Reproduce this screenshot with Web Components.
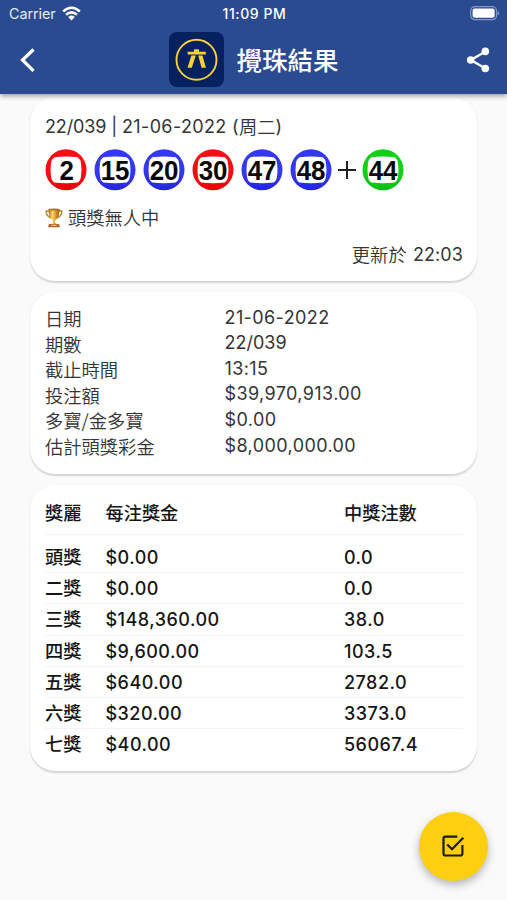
<!DOCTYPE html>
<html lang="zh-Hant"><head><meta charset="utf-8"><title>攪珠結果</title>
<style>
html,body{margin:0;height:900px;overflow:hidden;background:#fafafa}
body{font-family:Inter,"Noto Sans CJK TC",sans-serif}
</style></head><body>
<result-app></result-app>
<script>
const define=(name,html)=>customElements.define(name,class extends HTMLElement{
  connectedCallback(){
    if(this.shadowRoot)return;
    this.attachShadow({mode:'open'}).innerHTML=typeof html==='function'?html(this):html;
  }
});

define('status-bar',`<style>
:host{display:grid;grid-template-columns:1fr auto 1fr;align-items:center;height:27px;padding:0 7px 0 9px;color:#fff;font-size:14.4px;line-height:27px;box-sizing:border-box}
.l{display:flex;align-items:center;gap:6px;color:#e4e9f6;letter-spacing:-.08px}
.t{font-weight:500;font-size:14px;letter-spacing:.6px}
.r{display:flex;justify-content:flex-end}
svg{display:block}
</style>
<div class="l"><span>Carrier</span><svg width="19" height="15" viewBox="0 0 19 15" fill="none" stroke="#fff" stroke-width="2.5"><path d="M1.2 5.5Q9.5-2 17.8 5.5M4.1 8.8Q9.5 4 14.9 8.8"/><path d="M6.2 11Q9.5 8.2 12.8 11L9.5 14.4Z" fill="#fff" stroke="none"/></svg></div>
<span class="t">11:09 PM</span>
<div class="r"><svg width="30" height="15" viewBox="0 0 30 15"><rect x=".7" y=".7" width="25.8" height="13" rx="4" fill="none" stroke="#8496c8" stroke-width="1.2"/><rect x="2.6" y="2.6" width="22" height="9.2" rx="2" fill="#fff"/><path d="M27.7 4.8Q30.5 7.2 27.7 9.6Z" fill="#8496c8"/></svg></div>`);

define('app-header',`<style>
:host{display:block;height:94px;background:#2b4b91;box-shadow:0 2px 5px rgba(0,0,0,.38);position:relative;z-index:1}
.bar{display:grid;grid-template-columns:1fr auto 1fr;align-items:center;height:65px;padding:0 17px 0 18px}
.title{display:flex;align-items:center;gap:12px;color:#fff;font:500 25.5px/36px "Noto Sans CJK TC",sans-serif}
.title span{padding-bottom:2px}
.share{justify-self:end}svg{display:block}
</style><status-bar></status-bar>
<div class="bar">
<svg width="24" height="28" viewBox="0 0 24 28" fill="none" stroke="#fff" stroke-width="3.2"><path d="M15.5 3.5 4.5 14l11 10.8"/></svg>
<div class="title"><svg width="55" height="55" viewBox="0 0 55 55"><rect width="55" height="55" rx="8" fill="#05215f"/><circle cx="27.5" cy="27.7" r="20" fill="none" stroke="#f5d13c" stroke-width="1.9"/><path d="M18.6 19.8H25V17.3H30V19.8H36.8V22.6H18.6ZM22.4 23.6H26.8L22.8 35.7H18.5ZM29.2 23.6H33.4L37 35.7H32.6Z" fill="#f5d13c"/></svg><span>攪珠結果</span></div>
<svg class="share" width="24" height="26" viewBox="0 0 24 26" fill="#fff"><path d="M19.5 4.5 4.8 13l14.7 8.5" fill="none" stroke="#fff" stroke-width="2.4"/><circle cx="19.3" cy="4.4" r="3.8"/><circle cx="4.7" cy="13" r="3.8"/><circle cx="19.3" cy="21.5" r="3.8"/></svg>
</div>`);

define('result-card',`<style>
:host{display:block;box-sizing:border-box;background:#fff;border-radius:25px;box-shadow:0 1.5px 1.5px rgba(0,0,0,.15),0 0 2px rgba(0,0,0,.03);color:#343434;padding:0 14px 0 15px}
</style><slot></slot>`);

define('draw-ball',el=>{
 const c={red:['#fa0d12','#e80008'],blue:['#3438ef','#2424e0'],green:['#10d018','#06be14']}[el.getAttribute('color')];
 const n=el.getAttribute('number'),x=n.length===1?21.8:21.1;
 return `<style>:host{display:block;width:42px;height:42px}svg{display:block}</style>
 <svg width="42" height="42" viewBox="0 0 42 42"><defs><linearGradient id="g" x2="0" y2="1"><stop offset=".6" stop-color="${c[0]}"/><stop offset="1" stop-color="${c[1]}"/></linearGradient></defs>
 <circle cx="21" cy="20.8" r="20.5" fill="url(#g)"/><path d="M9.3 8.2Q21 6.6 32.7 8.2Q35.4 10 36 14Q37 20.7 36 27.4Q35.4 31.8 32.7 33.4Q21 35 9.3 33.4Q6.6 31.8 6 27.4Q5 20.7 6 14Q6.6 10 9.3 8.2Z" fill="#fff"/>
 <text x="${x}" y="30.5" text-anchor="middle" font-family="Liberation Sans,sans-serif" font-weight="700" font-size="27.5" textLength="${n.length*14.4}" lengthAdjust="spacingAndGlyphs" fill="#080808">${n}</text></svg>`});

define('draw-summary',`<style>
:host{display:block;height:184px;padding-top:18px;box-sizing:border-box;font-size:18px}
.head{display:flex;align-items:center;height:24px;white-space:pre;line-height:24px}
.cjk{font-family:"Noto Sans CJK TC",sans-serif;font-weight:350;font-size:18.3px;position:relative;top:-1px}
.a{letter-spacing:-.13px}.b{letter-spacing:.35px}
.balls{display:flex;gap:7px;margin-top:10px;height:42px;align-items:center}
.plus{width:18px;margin:0 -1px;display:block}
.note{display:flex;gap:5px;margin-top:14px;height:26px;line-height:26px;align-items:center}
.time{display:flex;justify-content:flex-end;gap:6px;margin-top:11px;height:26px;line-height:26px;letter-spacing:.1px}
</style>
<div class="head"><span class="a">22/039 | </span><span class="b">21-06-2022 (</span><span class="cjk">周二</span><span>)</span></div>
<div class="balls"><draw-ball number="2" color="red"></draw-ball><draw-ball number="15" color="blue"></draw-ball><draw-ball number="20" color="blue"></draw-ball><draw-ball number="30" color="red"></draw-ball><draw-ball number="47" color="blue"></draw-ball><draw-ball number="48" color="blue"></draw-ball><svg class="plus" width="18" height="18" viewBox="0 0 18 18"><path d="M9 0v18M0 9h18" stroke="#222" stroke-width="2"/></svg><draw-ball number="44" color="green"></draw-ball></div>
<div class="note"><svg width="18" height="20" viewBox="0 0 18 20"><defs><linearGradient id="gold"><stop stop-color="#a66516"/><stop offset=".35" stop-color="#fad86b"/><stop offset=".6" stop-color="#e5a52c"/><stop offset="1" stop-color="#9a5710"/></linearGradient></defs><path d="M4 3H1.2C1 7 3.2 9 6.5 10M14 3h2.8C17 7 14.8 9 11.5 10" fill="none" stroke="#b9862b" stroke-width="1.4"/><path d="M3.5 1.2h11C14.4 7 13 11 10 12.2v2.6l2.2 1.4H5.8L8 14.8v-2.6C5 11 3.6 7 3.5 1.2Z" fill="url(#gold)"/><ellipse cx="9" cy="1.5" rx="5.5" ry="1" fill="#a9741c"/><path d="M4 16h10l1 3.2H3Z" fill="#b5602d"/><path d="M6.5 16.7h5V18h-5Z" fill="#efbd72"/></svg><span class="cjk">頭獎無人中</span></div>
<div class="time"><span class="cjk">更新於</span><span>22:03</span></div>`);

define('info-row',`<style>
:host{display:grid;grid-template-columns:179.5px 1fr;height:25.65px;line-height:25.65px;font-size:18px}
.k{font:350 18.3px/25.65px "Noto Sans CJK TC",sans-serif;padding-top:1.4px}
.v{letter-spacing:.4px}
:host([tight]) .v{letter-spacing:0}
</style><span class="k"><slot name="label"></slot></span><span class="v"><slot></slot></span>`);

define('prize-row',`<style>
:host{display:grid;grid-template-columns:60.5px 238.5px 1fr;box-sizing:border-box;height:31.2px;line-height:31px;font-size:18px;font-weight:500;letter-spacing:.48px;color:#151515;border-bottom:1.5px solid #f4f4f4}
:host([head]){height:50.5px;line-height:54px;font-family:"Noto Sans CJK TC",sans-serif;font-size:18.2px;letter-spacing:0;margin-bottom:7px}
:host(:last-of-type){border-bottom:0}
.k{font-family:"Noto Sans CJK TC",sans-serif;font-size:18.2px;letter-spacing:0;position:relative;top:-1px}
:host([head]) .k{top:0}
</style><span class="k"><slot name="tier"></slot></span><span><slot name="prize"></slot></span><span><slot></slot></span>`);

define('verify-button',`<style>:host{display:grid;place-items:center;position:absolute;left:418.5px;top:812px;width:69px;height:69px;border-radius:50%;background:#fece10;box-shadow:0 4px 8px rgba(0,0,0,.28)}svg{display:block;margin:0 1px 1px 0}</style>
<svg width="24" height="24" viewBox="0 0 24 24" fill="none" stroke="#191c17" stroke-width="2.2" stroke-linecap="square"><path d="M15.2 2.6H4.4Q2.5 2.6 2.5 4.5V19.5Q2.5 21.5 4.4 21.5H19.4Q21.4 21.5 21.4 19.5V12.2"/><path d="M7 11.3 11 15.2 21.5 4.6"/></svg>`);

const info=[['日期','21-06-2022'],['期數','22/039'],['截止時間','13:15'],['投注額','$39,970,913.00'],['多寶/金多寶','$0.00'],['估計頭獎彩金','$8,000,000.00']];
const prizes=[['獎麗','每注獎金','中獎注數'],['頭獎','$0.00','0.0'],['二獎','$0.00','0.0'],['三獎','$148,360.00','38.0'],['四獎','$9,600.00','103.5'],['五獎','$640.00','2782.0'],['六獎','$320.00','3373.0'],['七獎','$40.00','56067.4']];
define('result-app',()=>`<style>
:host{display:block;height:900px;position:relative}
main{display:flex;flex-direction:column;gap:10.5px;padding:3px 30px 0}
.info{height:182.5px;padding-top:13px}.prizes{height:286px}
</style><app-header></app-header><main>
<result-card><draw-summary></draw-summary></result-card>
<result-card class="info">${info.map(([k,v])=>`<info-row${v.includes('/')?' tight':''}><span slot="label">${k}</span>${v}</info-row>`).join('')}</result-card>
<result-card class="prizes">${prizes.map(([a,b,c],i)=>`<prize-row${i?'':' head'}><span slot="tier">${a}</span><span slot="prize">${b}</span>${c}</prize-row>`).join('')}</result-card>
</main><verify-button></verify-button>`);
</script></body></html>
